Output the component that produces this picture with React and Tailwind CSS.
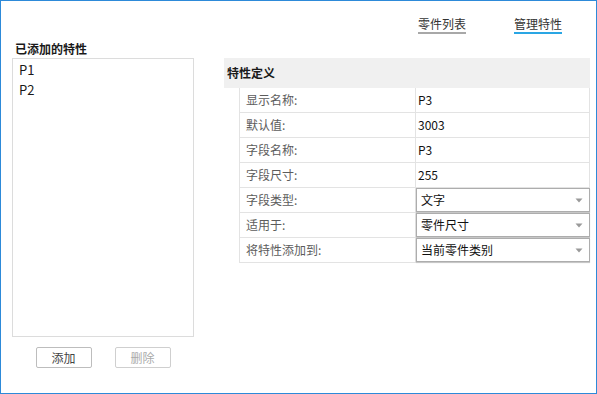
import React from "react";

const rows = [
  { label: "显示名称:", value: "P3" },
  { label: "默认值:", value: "3003" },
  { label: "字段名称:", value: "P3" },
  { label: "字段尺寸:", value: "255" },
  { label: "字段类型:", value: "文字", select: true },
  { label: "适用于:", value: "零件尺寸", select: true },
  { label: "将特性添加到:", value: "当前零件类别", select: true },
];

function Arrow() {
  return (
    <svg width="8" height="5" viewBox="0 0 8 5" className="mr-[6px]">
      <path d="M0.5 0.5 L7.5 0.5 L4 4.5 Z" fill="#9a9a9a" />
    </svg>
  );
}

export default function App() {
  return (
    <div className="w-[597px] h-[394px] border border-[#2d8ad9] bg-white overflow-hidden font-['Noto_Sans_CJK_SC','Noto_Sans',sans-serif] text-[12px] text-[#222]">
      {/* tabs */}
      <div className="flex justify-end gap-[48px] pr-[34px] pt-[15px]">
        <div className="leading-[16px] text-[#333] border-b-2 border-[#a8a8a8]">零件列表</div>
        <div className="leading-[16px] text-[#333] border-b-2 border-[#2aa6e4]">管理特性</div>
      </div>

      <div className="pl-[11px]">
        <div className="mt-[7px] mb-[1px] pl-[3px] leading-[16px] font-bold text-[#1a1a1a]">已添加的特性</div>

        <div className="flex">
          {/* left list */}
          <div className="w-[182px]">
            <div className="h-[279px] border border-[#dcdcdc] pt-[1px] pl-[6px] text-[13px] leading-[20px] text-[#1a1a1a]">
              <div>P1</div>
              <div>P2</div>
            </div>
            <div className="flex justify-center gap-[23px] mt-[10px]">
              <button className="w-[56px] h-[21px] border border-[#bdbdbd] rounded-[2px] bg-white text-[12px] leading-[19px] text-[#444]">添加</button>
              <button className="w-[56px] h-[21px] border border-[#cfcfcf] rounded-[2px] bg-white text-[12px] leading-[19px] text-[#aaaaaa]">删除</button>
            </div>
          </div>

          {/* right panel */}
          <div className="ml-[30px] w-[366px]">
            <div className="h-[30px] bg-[#f0f0f0] flex items-center pl-[3px] font-bold text-[#1a1a1a]">特性定义</div>
            <div className="ml-[15px] border-l border-r border-[#e3e3e3]">
              {rows.map((r) => (
                <div key={r.label} className="grid grid-cols-[176px_1fr] h-[25px] border-b border-[#e3e3e3]">
                  <div className="border-r border-[#e3e3e3] pl-[6px] flex items-center text-[#5c5c5c]">{r.label}</div>
                  {r.select ? (
                    <div className="h-[24px] -mr-px border border-[#adadad] shadow-[0_1px_1px_rgba(0,0,0,0.12)] flex items-center justify-between pl-[4px] text-[#111]">
                      <span>{r.value}</span>
                      <Arrow />
                    </div>
                  ) : (
                    <div className="pl-[2px] flex items-center text-[#111]">{r.value}</div>
                  )}
                </div>
              ))}
            </div>
          </div>
        </div>
      </div>
    </div>
  );
}
